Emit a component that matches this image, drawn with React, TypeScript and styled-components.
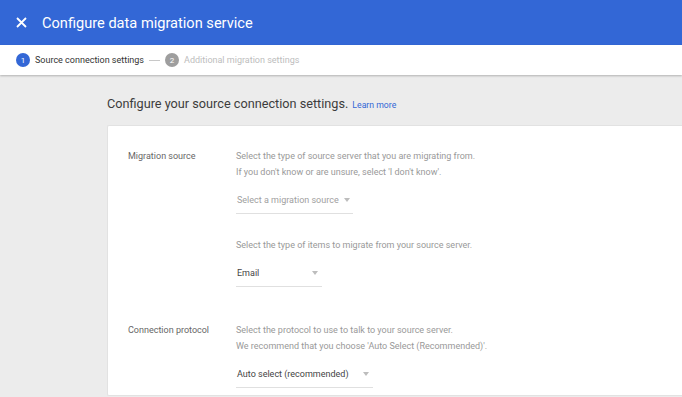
import styled, { createGlobalStyle } from 'styled-components';

const GlobalStyle = createGlobalStyle`
  html, body {
    margin: 0;
    padding: 0;
    background: #ececec;
    font-family: Roboto, "Noto Sans", Arial, sans-serif;
    overflow: hidden;
  }
`;

const Page = styled.div`
  width: 682px;
  height: 397px;
  display: flex;
  flex-direction: column;
  background: #ececec;
  overflow: hidden;
`;

const Header = styled.header`
  flex-shrink: 0;
  height: 45px;
  background: #3367d6;
  display: flex;
  align-items: center;
  padding-left: 14px;
  gap: 14px;
  color: #fff;
`;

const CloseButton = styled.button`
  border: 0;
  background: none;
  padding: 0;
  width: 14px;
  height: 14px;
  display: flex;
  align-items: center;
  justify-content: center;
  cursor: pointer;
`;

const Title = styled.h1`
  margin: 0;
  font-size: 14.6px;
  font-weight: 400;
`;

const Stepper = styled.nav`
  flex-shrink: 0;
  height: 30px;
  background: #fff;
  display: flex;
  align-items: center;
  padding-left: 16px;
  box-shadow: 0 1px 2px rgba(0, 0, 0, 0.25);
  position: relative;
  z-index: 1;
`;

const Step = styled.div`
  display: flex;
  align-items: center;
  gap: 5px;
`;

const StepNum = styled.span<{ $active?: boolean }>`
  width: 14px;
  height: 14px;
  border-radius: 50%;
  background: ${p => (p.$active ? '#3367d6' : '#9e9e9e')};
  color: #fff;
  font-size: 8px;
  display: flex;
  align-items: center;
  justify-content: center;
`;

const StepLabel = styled.span<{ $active?: boolean }>`
  font-size: 9px;
  color: ${p => (p.$active ? '#333' : '#bdbdbd')};
`;

const StepDash = styled.span`
  width: 11px;
  height: 1px;
  background: #c8c8c8;
  margin: 0 5px;
`;

const Content = styled.main`
  flex: 1;
  min-height: 0;
  padding: 20px 0 1px 107px;
  display: flex;
  flex-direction: column;
`;

const Heading = styled.h2`
  margin: 0 0 11px;
  font-size: 12.7px;
  font-weight: 400;
  color: #3c3c3c;
  line-height: 18px;
  white-space: nowrap;
`;

const LearnMore = styled.a`
  font-size: 8.7px;
  color: #3367d6;
  text-decoration: none;
  margin-left: 4px;
`;

const Card = styled.section`
  flex: 1;
  min-height: 0;
  overflow: hidden;
  background: #fff;
  border: 1px solid #e2e2e2;
  border-right: 0;
  border-radius: 2px 0 0 2px;
  padding: 22px 0 0 20px;
`;

const Row = styled.div`
  display: grid;
  grid-template-columns: 108px 1fr;
  margin-bottom: 35px;
`;

const Label = styled.div`
  font-size: 9px;
  color: #666;
  line-height: 16px;
`;

const Field = styled.div`
  display: flex;
  flex-direction: column;
  align-items: flex-start;
`;

const Help = styled.p`
  margin: 0;
  font-size: 9px;
  color: #999;
  line-height: 16px;
  white-space: nowrap;
`;

const Select = styled.div<{ $w: number; $placeholder?: boolean }>`
  width: ${p => p.$w}px;
  height: 22px;
  margin-top: 12px;
  border-bottom: 1px solid #e0e0e0;
  display: flex;
  align-items: center;
  justify-content: space-between;
  gap: 5px;
  font-size: 9px;
  white-space: nowrap;
  color: ${p => (p.$placeholder ? '#a0a0a0' : '#444')};
  padding: 0 4px 5px 1px;
  box-sizing: border-box;
`;

const Caret = styled.span`
  width: 0;
  height: 0;
  border-left: 3.5px solid transparent;
  border-right: 3.5px solid transparent;
  border-top: 4px solid #bdbdbd;
`;

const Gap = styled.div`
  height: 23px;
`;

export default function App() {
  return (
    <>
      <GlobalStyle />
      <Page>
        <Header>
          <CloseButton aria-label="Close">
            <svg width="11" height="11" viewBox="0 0 11 11">
              <path d="M1 1L10 10M10 1L1 10" stroke="#fff" strokeWidth="1.8" />
            </svg>
          </CloseButton>
          <Title>Configure data migration service</Title>
        </Header>
        <Stepper>
          <Step>
            <StepNum $active>1</StepNum>
            <StepLabel $active>Source connection settings</StepLabel>
          </Step>
          <StepDash />
          <Step>
            <StepNum>2</StepNum>
            <StepLabel>Additional migration settings</StepLabel>
          </Step>
        </Stepper>
        <Content>
          <Heading>
            Configure your source connection settings.
            <LearnMore href="#">Learn more</LearnMore>
          </Heading>
          <Card>
            <Row>
              <Label>Migration source</Label>
              <Field>
                <Help>Select the type of source server that you are migrating from.</Help>
                <Help>If you don't know or are unsure, select 'I don't know'.</Help>
                <Select $w={117} $placeholder>
                  Select a migration source <Caret />
                </Select>
                <Gap />
                <Help>Select the type of items to migrate from your source server.</Help>
                <Select $w={86}>
                  Email <Caret />
                </Select>
              </Field>
            </Row>
            <Row>
              <Label>Connection protocol</Label>
              <Field>
                <Help>Select the protocol to use to talk to your source server.</Help>
                <Help>We recommend that you choose 'Auto Select (Recommended)'.</Help>
                <Select $w={137}>
                  Auto select (recommended) <Caret />
                </Select>
              </Field>
            </Row>
          </Card>
        </Content>
      </Page>
    </>
  );
}
